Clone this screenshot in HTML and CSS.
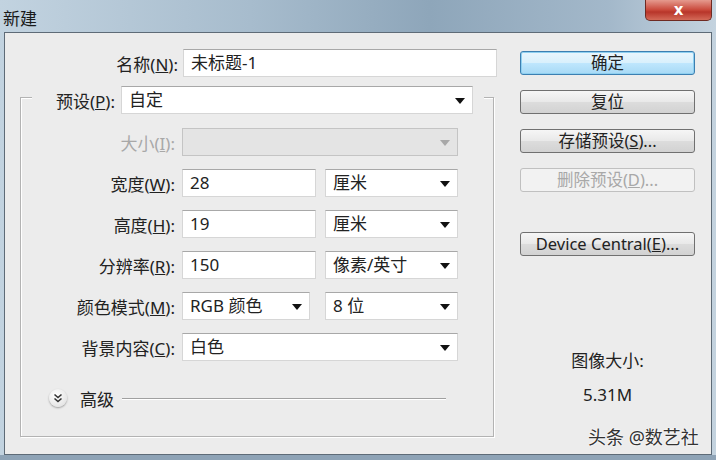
FILE: index.html
```html
<!DOCTYPE html>
<html lang="zh-CN">
<head>
  <meta charset="UTF-8">
  <title>新建</title>
  <link rel="stylesheet" href="styles.css">
</head>
<body>
  <div class="window">
    <div class="titlebar">
      <span class="title">新建</span>
      <button class="close">x</button>
    </div>
    <div class="panel">
      <div class="main">
        <div class="name-row">
          <label class="name-label">名称(<u>N</u>):</label>
          <div class="field name-field">未标题-1</div>
        </div>
        <div class="group">
          <div class="group-head">
            <label class="head-label">预设(<u>P</u>):</label>
            <div class="field select preset">自定</div>
          </div>
          <div class="row">
            <label class="label disabled">大小(<u>I</u>):</label>
            <div class="field select full off"></div>
          </div>
          <div class="row">
            <label class="label">宽度(<u>W</u>):</label>
            <div class="field num">28</div>
            <div class="field select unit">厘米</div>
          </div>
          <div class="row">
            <label class="label">高度(<u>H</u>):</label>
            <div class="field num">19</div>
            <div class="field select unit">厘米</div>
          </div>
          <div class="row">
            <label class="label">分辨率(<u>R</u>):</label>
            <div class="field num">150</div>
            <div class="field select unit">像素/英寸</div>
          </div>
          <div class="row">
            <label class="label">颜色模式(<u>M</u>):</label>
            <div class="field select mode">RGB 颜色</div>
            <div class="field select unit">8 位</div>
          </div>
          <div class="row">
            <label class="label">背景内容(<u>C</u>):</label>
            <div class="field select full">白色</div>
          </div>
          <div class="advanced">
            <span class="chevron">
              <svg width="10" height="10" viewBox="0 0 10 10"><path d="M1.5 1.5 L5 4.5 L8.5 1.5 M1.5 5.5 L5 8.5 L8.5 5.5" fill="none" stroke="#333" stroke-width="1.6"/></svg>
            </span>
            <span class="adv-text">高级</span>
            <span class="adv-line"></span>
          </div>
        </div>
      </div>
      <div class="side">
        <button class="btn default">确定</button>
        <button class="btn">复位</button>
        <button class="btn">存储预设(<u>S</u>)...</button>
        <button class="btn" disabled>删除预设(<u>D</u>)...</button>
        <button class="btn device">Device Central(<u>E</u>)...</button>
        <div class="info">图像大小:</div>
        <div class="info size">5.31M</div>
      </div>
    </div>
    <div class="frame-bottom"></div>
    <div class="watermark">头条 @数艺社</div>
  </div>
</body>
</html>
```
FILE: styles.css
```css
body {
  margin: 0;
  font-family: "Noto Sans", "Noto Sans CJK SC", sans-serif;
  font-size: 17px;
  color: #222;
}
.window {
  position: relative;
  width: 716px;
  height: 460px;
  overflow: hidden;
  background: linear-gradient(90deg, #c2d3e0 0%, #a7bccd 35%, #8ea6ba 60%, #a3b8ca 85%, #c4d3df 100%);
}
.titlebar {
  height: 32px;
  display: flex;
  justify-content: space-between;
  align-items: flex-start;
}
.title {
  margin: 5px 0 0 3px;
  font-size: 17px;
  color: #1a1a1a;
}
.close {
  width: 67px;
  height: 21px;
  margin-right: 4px;
  border: 1px solid #6e2a22;
  border-top: none;
  border-radius: 0 0 5px 5px;
  background: linear-gradient(#e59a8e, #c9483a 50%, #b8352a 60%, #d46a58);
  color: #fff;
  font-family: "DejaVu Sans", sans-serif;
  font-weight: bold;
  font-size: 15px;
  line-height: 16px;
  padding: 0;
}
.panel {
  display: flex;
  height: 421px;
  margin: 0 4px;
  border: 1px solid #5e6b77;
  background: #ececec;
}
.main {
  width: 485px;
  padding: 16px 0 0 15px;
}
.name-row {
  display: flex;
  align-items: center;
}
.name-label {
  width: 158px;
  text-align: right;
  margin-right: 5px;
}
.field {
  height: 28px;
  box-sizing: border-box;
  background: #fff;
  border: 1px solid #d6d6d6;
  border-top-color: #a8a8a8;
  padding-left: 7px;
  line-height: 26px;
  position: relative;
}
.name-field {
  width: 314px;
}
.select::after {
  content: "";
  position: absolute;
  right: 7px;
  top: 11px;
  border-left: 5px solid transparent;
  border-right: 5px solid transparent;
  border-top: 6px solid #111;
}
.group {
  width: 474px;
  height: 340px;
  box-sizing: border-box;
  margin-top: 20px;
  border: 1px solid #b3b3b3;
  box-shadow: inset 1px 1px 0 #fff, 1px 1px 0 #fff;
}
.group-head {
  display: flex;
  align-items: center;
  margin: -12px 9px 0 11px;
  padding-right: 11px;
  background: #ececec;
}
.head-label {
  width: 83px;
  text-align: right;
  margin-right: 6px;
}
.preset {
  flex: 1;
}
.row {
  display: flex;
  align-items: center;
  margin-top: 13px;
}
.group-head + .row {
  margin-top: 14px;
}
.label {
  width: 154px;
  text-align: right;
  margin-right: 7px;
}
.disabled {
  color: #a8a8a8;
}
.num {
  width: 134px;
  margin-right: 9px;
}
.unit {
  width: 133px;
}
.mode {
  width: 128px;
  margin-right: 15px;
}
.full {
  width: 276px;
}
.off {
  background: #e4e4e4;
  border-color: #c4c4c4;
}
.off::after {
  border-top-color: #a8a8a8;
}
.advanced {
  display: flex;
  align-items: center;
  height: 20px;
  margin-top: 27px;
  padding-left: 28px;
}
.chevron {
  width: 18px;
  height: 18px;
  border-radius: 50%;
  background: radial-gradient(circle at 40% 35%, #fff, #dcdcdc);
  box-shadow: 0 1px 2px rgba(0, 0, 0, 0.35);
  display: flex;
  align-items: center;
  justify-content: center;
}
.adv-text {
  margin-left: 13px;
}
.adv-line {
  flex: 1;
  height: 1px;
  margin: 0 47px 0 8px;
  background: #a0a0a0;
  box-shadow: 0 1px 0 #fff;
}
.side {
  width: 175px;
  margin-left: 15px;
  padding-top: 18px;
  display: flex;
  flex-direction: column;
  align-items: stretch;
}
.btn {
  height: 24px;
  margin-bottom: 15px;
  border: 1px solid #707070;
  border-radius: 3px;
  background: linear-gradient(#f6f6f6, #e9e9e9 48%, #dcdcdc 52%, #d2d2d2);
  font-family: "Noto Sans", "Noto Sans CJK SC", sans-serif;
  font-size: 16.5px;
  color: #222;
  line-height: 20px;
  padding: 0;
}
.btn.default {
  border-color: #3c7fb1;
  background: linear-gradient(#eaf6fd, #d9f0fc 48%, #bee6fd 52%, #a7d9f5);
  box-shadow: 0 0 0 1px #8fd0f0 inset;
}
.btn:disabled {
  color: #a8a8a8;
  border-color: #c0c0c0;
  background: #f2f2f2;
}
.btn.device {
  margin-top: 25px;
}
.info {
  text-align: center;
  margin-top: 80px;
  line-height: 20px;
}
.info.size {
  margin-top: 14px;
}
.frame-bottom {
  height: 5px;
  background: #8ea3b6;
}
.watermark {
  position: absolute;
  left: 588px;
  top: 423px;
  font-size: 18px;
  color: #333;
  text-shadow: 0 0 2px #fff, 0 0 2px #fff;
}
```
